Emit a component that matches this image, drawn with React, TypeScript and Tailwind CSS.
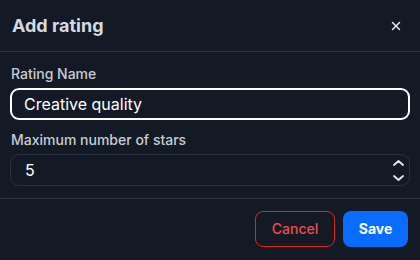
import { X } from 'lucide-react';

export default function App() {
  return (
    <div
      className="w-[420px] h-[260px] bg-[#131a26] text-gray-200 flex flex-col"
      style={{ fontFamily: 'Inter, "Noto Sans", sans-serif' }}
    >
      {/* Header */}
      <div className="h-[52px] px-3 flex items-center justify-between border-b border-[#2a3441]">
        <h2 className="text-[18px] font-bold text-[#d5d9e0]">Add rating</h2>
        <button className="w-6 h-6 flex items-center justify-center text-gray-200">
          <X className="w-[14px] h-[14px]" strokeWidth={2.5} />
        </button>
      </div>

      {/* Body */}
      <div className="px-[10px] pt-[12px] pb-[12px] flex flex-col border-b border-[#2a3441]">
        <label className="text-sm font-medium text-[#c7ccd4] leading-5 px-[1px]">Rating Name</label>
        <input
          defaultValue="Creative quality"
          className="mt-[4px] h-[32px] w-full rounded-[9px] border-2 border-white bg-[#131a26] px-[12px] text-[16px] text-white outline-none"
        />
        <label className="mt-[10px] text-sm font-medium text-[#c7ccd4] leading-5 px-[1px]">
          Maximum number of stars
        </label>
        <div className="mt-[4px] h-[32px] w-full rounded-[9px] border border-[#283243] flex items-center justify-between pl-[14px] pr-[5px]">
          <span className="text-[16px] text-white">5</span>
          <div className="flex flex-col items-center gap-[9px] text-gray-200">
            <svg width="11" height="6" viewBox="0 0 11 6" fill="none" stroke="currentColor" strokeWidth="1.8" strokeLinecap="round" strokeLinejoin="round">
              <path d="M1 5 L5.5 1 L10 5" />
            </svg>
            <svg width="11" height="6" viewBox="0 0 11 6" fill="none" stroke="currentColor" strokeWidth="1.8" strokeLinecap="round" strokeLinejoin="round">
              <path d="M1 1 L5.5 5 L10 1" />
            </svg>
          </div>
        </div>
      </div>

      {/* Footer */}
      <div className="flex justify-end gap-[8px] pt-[12px] pr-[12px]">
        <button className="w-[80px] h-[36px] rounded-lg border border-[#e02424] text-[#ef4b4b] text-sm font-medium">
          Cancel
        </button>
        <button className="w-[65px] h-[36px] rounded-lg bg-[#0a6cff] text-white text-sm font-bold">
          Save
        </button>
      </div>
    </div>
  );
}
